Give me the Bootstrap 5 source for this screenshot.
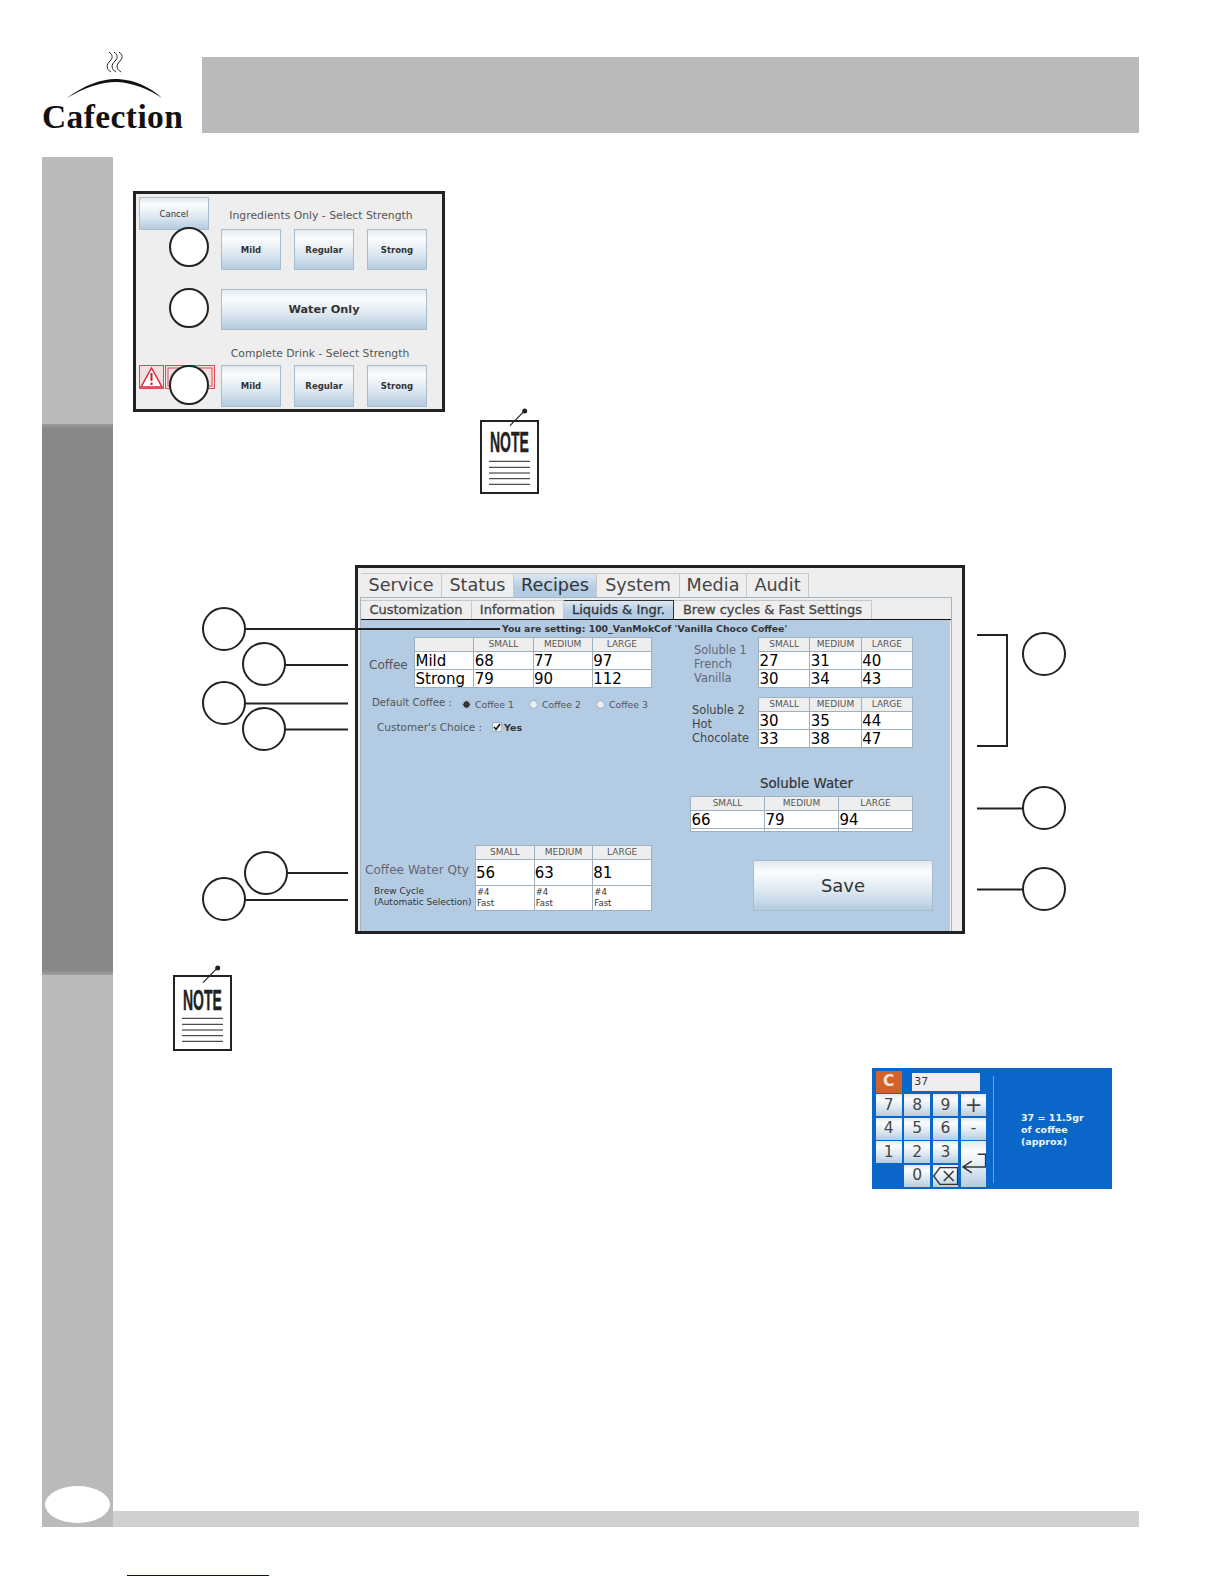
<!DOCTYPE html>
<html lang="en">
<head>
  <meta charset="UTF-8" />
  <meta name="viewport" content="width=device-width, initial-scale=1.0"/>
  <title>Cafection - Recipes</title>
  <link href="https://cdn.jsdelivr.net/npm/bootstrap@5.3.2/dist/css/bootstrap.min.css" rel="stylesheet" />
  <style>
    body { background: #fff; font-family: "DejaVu Sans", sans-serif; color: #444; }
    .doc-page { width: 1224px; height: 1584px; overflow: hidden; position: relative; }
    .doc-head { height: 157px; padding: 57px 85px 24px 42px; }
    .logo-box { width: 160px; height: 76px; }
    .logo-name { font: 700 33.5px/1 "Liberation Serif", serif; letter-spacing: .4px; color: #111; margin-top: 43px; width: 150px; }
    .head-bar { background: #bababa; flex: 1; }
    .doc-main { height: 1370px; margin-left: 42px; margin-right: 85px; }
    .side-col { width: 71px; position: relative; }
    .side-a { height: 267px; background: #bababa; }
    .side-b { height: 551px; background: linear-gradient(#999, #888 5px, #888 546px, #a0a0a0); }
    .side-c { flex: 1; background: #bababa; }
    .page-oval { position: absolute; left: 3px; bottom: 4px; width: 65px; height: 37px; border-radius: 50%; background: #fff; }
    .foot-bar { height: 16px; background: #d0d0d0; margin-top: auto; }
    .foot-link { width: 142px; margin: 48px 0 0 127px; border-top: 1px solid #00008b; }

    .gbtn { background: linear-gradient(#dfe9f1, #fbfdfe 22%, #d9e5ef 65%, #b5cbdf); border: 1px solid #a9bccb; border-radius: 0; padding: 0; color: #333; display: flex; align-items: center; justify-content: center; }
    .panel-one { width: 312px; height: 221px; margin: 34px 0 0 20px; border: 3px solid #222; background: #eee; }
    .p1-left { width: 85px; padding: 3px 0 0 3px; }
    .p1-cancel { width: 70px; height: 33px; font-size: 8.5px; padding-top: 1px; }
    .p1-warn { margin-top: 135px; display: block; }
    .p1-right { width: 206px; }
    .p1-head { font-size: 10.8px; line-height: 14px; color: #555; text-align: center; padding-right: 6px; white-space: nowrap; }
    .p1-row { gap: 13px; }
    .p1-btn { width: 60px; height: 41px; font-size: 8.5px; font-weight: 700; padding-top: 1px; }
    .p1-wide { width: 206px; height: 41px; font-size: 11.3px; font-weight: 700; margin: 19px 0 17px; padding-top: 1px; }

    .note-one { margin: -4px 0 0 367px; display: block; }
    .note-two { margin: 31px 0 0 60px; display: block; }
    .note-word { font: 700 14px "Liberation Sans", sans-serif; stroke: #222; stroke-width: .2px; fill: #222; }

    .screen-box { width: 610px; height: 369px; margin: 70px 0 0 242px; border: 3px solid #222; background: #eee; }
    .tab-row { margin: 5px 0 0 3px; height: 24px; }
    .tab-item { font-size: 17.6px; line-height: 22px; padding: 0; color: #444; background: #eee; border: 1px solid #c8c8c8; border-bottom: 0; border-left: 0; text-align: center; }
    .tab-item.on { background: linear-gradient(#dde8f2, #b3cce4 60%); color: #333; }
    .tab-pane-box { margin: 0 10px 0 2px; height: 334px; border: 1px solid #a5b5c2; border-bottom: 0; padding-top: 2px; }
    .sub-row { height: 20px; border-bottom: 1px solid #111; }
    .sub-item { font-size: 13px; -webkit-text-stroke: .3px; line-height: 18px; padding: 0; color: #444; background: #eee; border: 1px solid #c8c8c8; border-bottom: 0; border-left: 0; text-align: center; white-space: nowrap; }
    .sub-item.on { background: linear-gradient(#dde8f2, #b3cce4 60%); border-color: #333; border-width: 1px 1px 0 1px; color: #333; }
    .blue-pane { height: 311px; margin-right: 1px; background: #b3cce4; }
    .set-title { font-size: 9.3px; font-weight: 700; line-height: 17px; padding-left: 141px; color: #333; white-space: nowrap; }
    .pane-left { width: 329px; padding-left: 8px; }

    .table.val-table { table-layout: fixed; border-collapse: collapse; margin: 0; background: #fff; }
    .table.val-table > :not(caption) > * > * { padding: 1px 0 0 .5px; border: 1px solid #9fb0be; background: #fff; color: #000; font-size: 15px; line-height: 16px; height: 18px; text-align: left; vertical-align: middle; box-shadow: none; overflow: hidden; white-space: nowrap; }
    .table.val-table > :not(caption) > * > th.size-h { background: #eee; color: #555; font-size: 9px; font-weight: 400; height: 14px; line-height: 13px; text-align: center; padding: 0; }
    .table.val-table > :not(caption) > * > td.mini-c { font-size: 8.5px; line-height: 11px; color: #333; height: 25px; white-space: normal; padding: 0 0 0 1px; }
    .table.val-table > :not(caption) > * > td.tall-c { height: 26px; padding: 0; }
    .table.val-table > :not(caption) > * > td.thin-c { height: 3px; line-height: 0; font-size: 0; padding: 0; }
    .w-coffee { width: 238px; }
    .w-sol { width: 155px; }
    .w-water { width: 223px; }
    .w-brew { width: 177px; }

    .coffee-lbl { width: 45px; font-size: 12px; color: #555; padding-top: 4px; }
    .opt-row { font-size: 9.3px; line-height: 14px; color: #555; }
    .lbl-def { font-size: 10.2px; margin: 0 0 0 3px; width: 90px; white-space: nowrap; }
    .lbl-cust { font-size: 10.5px; margin: 0 0 0 8px; width: 115px; white-space: nowrap; }
    .radio-i { width: 9px; height: 9px; border-radius: 50%; background: #e8eef4; border: 1px solid #9fb0be; margin: 4px 0 0 0; }
    .radio-i.sel { background: radial-gradient(#333 0 3px, #e8eef4 3.5px); }
    .opt-gap { width: 20px; }
    .opt-text { width: 38px; white-space: nowrap; margin-top: 2px; }
    .check-i { width: 10px; height: 10px; background: #eef2f6; border: 1px solid #9fb0be; color: #111; margin-top: 2px; }
    .yes-t { font-size: 9.5px; font-weight: 700; margin: 1px 0 0 2px; color: #333; }
    .brew-lbls { width: 114px; }
    .water-lbl { font-size: 12.1px; line-height: 26px; color: #667; margin: 12px 0 0 4px; white-space: nowrap; }
    .brew-lbl { font-size: 9px; line-height: 11px; color: #333; margin: 3px 0 0 13px; white-space: nowrap; }
    .sol-lbl { width: 68px; font-size: 11.4px; line-height: 14px; color: #667; padding-top: 6px; }
    .sol-two { color: #444; padding-left: 2px; }
    .sol-head { font-size: 13.4px; line-height: 18px; color: #333; text-align: center; width: 233px; -webkit-text-stroke: .2px #333; }
    .save-btn { width: 180px; height: 51px; font-size: 18px; margin: 28px 0 0 63px; }

    .keypad-box { width: 240px; height: 121px; margin: 16px 0 0 759px; background: #0b66c9; padding: 3px 0 0 4px; }
    .key-grid { display: grid; grid-template-columns: 25.6px 25.6px 25.6px 25.6px; grid-auto-rows: 21.8px; column-gap: 2.7px; row-gap: 1.7px; width: 111px; }
    .key-i { font-size: 15.5px; color: #444; border: 0; }
    .key-op { font-size: 21px; line-height: 1; }
    .key-c { background: #d4602a; color: #f7e6d8; font-weight: 700; }
    .key-input { grid-column: 2 / 5; margin: 2px 6px 2px 8px; background: #eee; font-size: 11px; line-height: 17px; padding-left: 2px; color: #333; }
    .key-enter { grid-column: 4; grid-row: 4 / 6; }
    .key-div { width: 1px; height: 107px; background: #6ea3de; margin: 5px 0 0 6px; }
    .key-text { font-size: 9.5px; font-weight: 700; line-height: 12px; color: #eef5fc; margin: 41px 0 0 27px; white-space: nowrap; }
    .callouts { position: absolute; left: 0; top: 0; pointer-events: none; }
  </style>
</head>
<body>

<div class="doc-page">

  <div class="doc-head d-flex">
    <div class="logo-box">
      <div class="logo-name">Cafection</div>
    </div>
    <div class="head-bar"></div>
  </div>

  <div class="doc-main d-flex">
    <div class="side-col d-flex flex-column">
      <div class="side-a"></div>
      <div class="side-b"></div>
      <div class="side-c"></div>
      <div class="page-oval"></div>
    </div>

    <div class="flex-grow-1 d-flex flex-column">

      <div class="panel-one d-flex">
        <div class="p1-left">
          <button class="btn gbtn p1-cancel">Cancel</button>
          <svg class="p1-warn" width="76" height="24" viewBox="0 0 76 24">
            <rect x=".5" y=".5" width="24" height="23" fill="#f4dfe0" stroke="#dc4a55"/>
            <path d="M12.500 3 L23 22 H2 Z" fill="#fff" stroke="#d22c3a" stroke-width="1.500"/>
            <path d="M12.500 8v8M12.500 17.500v2.500" stroke="#c0202c" stroke-width="2"/>
            <rect x="26.500" y=".5" width="49" height="23" fill="#f4dfe0" stroke="#dc4a55"/>
            <rect x="29" y="3" width="44" height="18" fill="none" stroke="#dc4a55"/>
          </svg>
        </div>
        <div class="p1-right">
          <div class="p1-head" style="margin-top:15px;margin-bottom:6px">Ingredients Only - Select Strength</div>
          <div class="d-flex p1-row">
            <button class="btn gbtn p1-btn">Mild</button>
            <button class="btn gbtn p1-btn">Regular</button>
            <button class="btn gbtn p1-btn">Strong</button>
          </div>
          <button class="btn gbtn p1-wide">Water Only</button>
          <div class="p1-head" style="margin-bottom:4px;padding-right:8px">Complete Drink - Select Strength</div>
          <div class="d-flex p1-row">
            <button class="btn gbtn p1-btn" style="height:42px">Mild</button>
            <button class="btn gbtn p1-btn" style="height:42px">Regular</button>
            <button class="btn gbtn p1-btn" style="height:42px">Strong</button>
          </div>
        </div>
      </div>

      <svg class="note-one" width="60" height="87" viewBox="0 0 60 87">
        <rect x="1" y="13" width="57" height="72" fill="#fff" stroke="#222" stroke-width="2"/>
        <path d="M30 17.700 L44.700 2.700" stroke="#222" stroke-width="1.200"/>
        <circle cx="44.700" cy="3" r="2.500" fill="#222"/>
        <text class="note-word" transform="translate(10 44) scale(1 2.100)">NOTE</text>
        <path d="M9 53.300H50M9 59.300H50M9 65H50M9 70.700H50M9 76.300H50" stroke="#222"/>
      </svg>

      <div class="screen-box">
        <div class="nav tab-row flex-nowrap">
          <div class="tab-item" style="width:81px">Service</div>
          <div class="tab-item" style="width:72px">Status</div>
          <div class="tab-item on" style="width:83px">Recipes</div>
          <div class="tab-item" style="width:83px">System</div>
          <div class="tab-item" style="width:67px">Media</div>
          <div class="tab-item" style="width:62px">Audit</div>
        </div>
        <div class="tab-pane-box">
          <div class="nav sub-row flex-nowrap">
            <div class="sub-item" style="width:111px">Customization</div>
            <div class="sub-item" style="width:92px">Information</div>
            <div class="sub-item on" style="width:110px">Liquids &amp; Ingr.</div>
            <div class="sub-item" style="width:198px">Brew cycles &amp; Fast Settings</div>
          </div>
          <div class="blue-pane">
            <div class="set-title">You are setting: 100_VanMokCof 'Vanilla Choco Coffee'</div>
            <div class="d-flex">
              <div class="pane-left">
                <div class="d-flex align-items-center">
                  <div class="coffee-lbl">Coffee</div>
                  <table class="table val-table w-coffee">
                    <tr><th class="size-h"></th><th class="size-h">SMALL</th><th class="size-h">MEDIUM</th><th class="size-h">LARGE</th></tr>
                    <tr><td>Mild</td><td>68</td><td>77</td><td>97</td></tr>
                    <tr><td>Strong</td><td>79</td><td>90</td><td>112</td></tr>
                  </table>
                </div>
                <div class="d-flex opt-row" style="margin-top:8px">
                  <div class="lbl-def">Default Coffee :</div>
                  <div class="radio-i sel"></div><div class="opt-text ps-1">Coffee 1</div>
                  <div class="opt-gap"></div>
                  <div class="radio-i"></div><div class="opt-text ps-1">Coffee 2</div>
                  <div class="opt-gap"></div>
                  <div class="radio-i"></div><div class="opt-text ps-1">Coffee 3</div>
                </div>
                <div class="d-flex opt-row" style="margin-top:8px">
                  <div class="lbl-cust">Customer's Choice :</div>
                  <div class="check-i d-flex align-items-center justify-content-center">
                    <svg width="8" height="8" viewBox="0 0 8 8"><path d="M1 4l2 2.500L7 1" fill="none" stroke="#111" stroke-width="1.600"/></svg>
                  </div>
                  <div class="yes-t">Yes</div>
                </div>
                <div class="d-flex" style="margin-top:110px;margin-left:-8px">
                  <div class="brew-lbls">
                    <div class="water-lbl">Coffee Water Qty</div>
                    <div class="brew-lbl">Brew Cycle<br>(Automatic Selection)</div>
                  </div>
                  <table class="table val-table w-brew">
                    <tr><th class="size-h">SMALL</th><th class="size-h">MEDIUM</th><th class="size-h">LARGE</th></tr>
                    <tr><td class="tall-c">56</td><td class="tall-c">63</td><td class="tall-c">81</td></tr>
                    <tr><td class="mini-c">#4<br>Fast</td><td class="mini-c">#4<br>Fast</td><td class="mini-c">#4<br>Fast</td></tr>
                  </table>
                </div>
              </div>
              <div>
                <div class="d-flex">
                  <div class="sol-lbl ps-1">Soluble 1<br>French<br>Vanilla</div>
                  <table class="table val-table w-sol">
                    <tr><th class="size-h">SMALL</th><th class="size-h">MEDIUM</th><th class="size-h">LARGE</th></tr>
                    <tr><td>27</td><td>31</td><td>40</td></tr>
                    <tr><td>30</td><td>34</td><td>43</td></tr>
                  </table>
                </div>
                <div class="d-flex" style="margin-top:9px">
                  <div class="sol-lbl sol-two">Soluble 2<br>Hot<br>Chocolate</div>
                  <table class="table val-table w-sol">
                    <tr><th class="size-h">SMALL</th><th class="size-h">MEDIUM</th><th class="size-h">LARGE</th></tr>
                    <tr><td>30</td><td>35</td><td>44</td></tr>
                    <tr><td>33</td><td>38</td><td>47</td></tr>
                  </table>
                </div>
                <div class="sol-head" style="margin-top:27px;margin-bottom:3px">Soluble Water</div>
                <table class="table val-table w-water">
                  <tr><th class="size-h">SMALL</th><th class="size-h">MEDIUM</th><th class="size-h">LARGE</th></tr>
                  <tr><td>66</td><td>79</td><td>94</td></tr>
                  <tr><td class="thin-c"></td><td class="thin-c"></td><td class="thin-c"></td></tr>
                </table>
                <button class="btn gbtn save-btn">Save</button>
              </div>
            </div>
          </div>
        </div>
      </div>

      <svg class="note-two" width="60" height="87" viewBox="0 0 60 87">
        <rect x="1" y="11" width="57" height="74" fill="#fff" stroke="#222" stroke-width="2"/>
        <path d="M30 17.700 L44.700 2.700" stroke="#222" stroke-width="1.200"/>
        <circle cx="44.700" cy="3" r="2.500" fill="#222"/>
        <text class="note-word" transform="translate(10 45) scale(1 2.100)">NOTE</text>
        <path d="M9 53.300H50M9 59.300H50M9 65H50M9 70.700H50M9 76.300H50" stroke="#222"/>
      </svg>

      <div class="keypad-box d-flex">
        <div class="key-grid">
          <div class="btn p-0 rounded-0 key-i key-c d-flex align-items-center justify-content-center">C</div>
          <div class="key-input">37</div>
          <button class="btn gbtn key-i">7</button>
          <button class="btn gbtn key-i">8</button>
          <button class="btn gbtn key-i">9</button>
          <button class="btn gbtn key-i key-op">+</button>
          <button class="btn gbtn key-i">4</button>
          <button class="btn gbtn key-i">5</button>
          <button class="btn gbtn key-i">6</button>
          <button class="btn gbtn key-i">-</button>
          <button class="btn gbtn key-i">1</button>
          <button class="btn gbtn key-i">2</button>
          <button class="btn gbtn key-i">3</button>
          <button class="btn gbtn key-i key-enter">
            <svg width="26" height="26" viewBox="0 0 26 26"><path d="M17 3H25V16H2M11 10L2 16l9 6" fill="none" stroke="#333" stroke-width="1.500"/></svg>
          </button>
          <div></div>
          <button class="btn gbtn key-i">0</button>
          <button class="btn gbtn key-i">
            <svg width="26" height="20" viewBox="0 0 26 20"><path d="M7 1.500H25V18.500H7L.7 10zM11 5l10 10M21 5L11 15" fill="none" stroke="#333" stroke-width="1.500"/></svg>
          </button>
        </div>
        <div class="key-div"></div>
        <div class="key-text">37 = 11.5gr<br>of coffee<br>(approx)</div>
      </div>

      <div class="foot-bar"></div>
    </div>
  </div>

  <div class="foot-link"></div>

  <svg class="callouts" width="1224" height="1584" viewBox="0 0 1224 1584">
    <!-- steam + arc of the logo -->
    <g fill="none" stroke="#222" stroke-width="1">
      <path d="M109 52c4 3 4 6 1 9c-4 4-4 8 1 11"/>
      <path d="M114 52c4 3 4 6 1 9c-4 4-4 8 1 11"/>
      <path d="M119 52c4 3 4 6 1 9c-4 4-4 8 1 11"/>
    </g>
    <path d="M67 98C85 84 105 78 118 79C135 80 150 87 162 98C148 89 134 83 117 82C100 82 84 88 67 98Z" fill="#111"/>

    <g fill="#fff" stroke="#222" stroke-width="2">
      <circle cx="189" cy="247" r="19"/>
      <circle cx="189" cy="308" r="19"/>
      <circle cx="189" cy="385" r="19"/>
      <path d="M245 629H500M285 665H348M245 703.500H348M285 729.500H348M287 873H348M245 900H348" fill="none"/>
      <circle cx="224" cy="629" r="21"/>
      <circle cx="264" cy="664" r="21"/>
      <circle cx="224" cy="703" r="21"/>
      <circle cx="264" cy="729" r="21"/>
      <circle cx="266" cy="873" r="21"/>
      <circle cx="224" cy="899" r="21"/>
      <path d="M977 635H1007V746H977M977 808.500H1023M977 889.500H1023" fill="none"/>
      <circle cx="1044" cy="654" r="21"/>
      <circle cx="1044" cy="808" r="21"/>
      <circle cx="1044" cy="889" r="21"/>
    </g>
  </svg>

</div>

<script src="https://cdn.jsdelivr.net/npm/bootstrap@5.3.2/dist/js/bootstrap.bundle.min.js"></script>
</body>
</html>
